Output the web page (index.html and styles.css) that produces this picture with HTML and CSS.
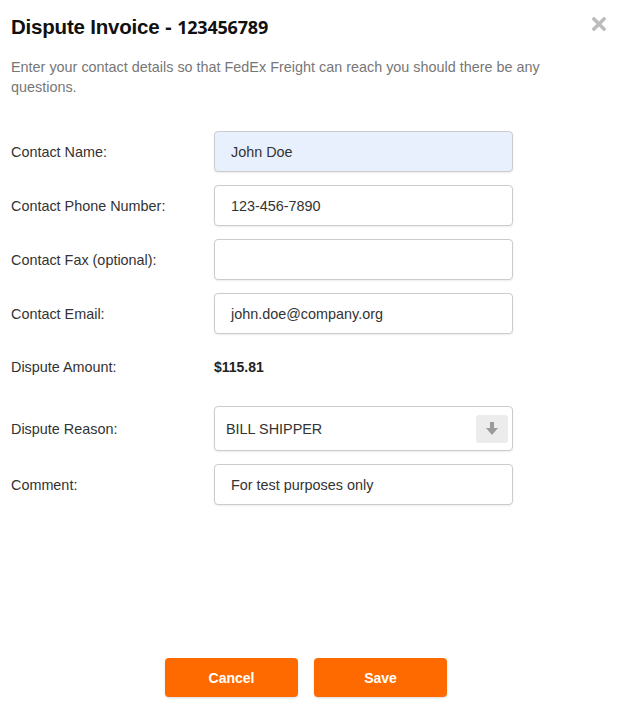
FILE: index.html
```html
<!DOCTYPE html>
<html>
<head>
<meta charset="utf-8">
<link rel="stylesheet" href="styles.css">
</head>
<body>
<div class="dialog">
  <div class="header">
    <h1 class="title">Dispute Invoice - <span class="inv">123456789</span></h1>
    <svg class="close" width="14" height="14" viewBox="0 0 14 14"><path d="M2 2 L12 12 M12 2 L2 12" stroke="#bdbdbd" stroke-width="3.6" stroke-linecap="square"/></svg>
  </div>
  <p class="desc">Enter your contact details so that FedEx Freight can reach you should there be any questions.</p>
  <div class="form">
    <div class="row"><div class="label">Contact Name:</div><div class="field autofill">John Doe</div></div>
    <div class="row"><div class="label">Contact Phone Number:</div><div class="field">123-456-7890</div></div>
    <div class="row"><div class="label">Contact Fax (optional):</div><div class="field"></div></div>
    <div class="row"><div class="label">Contact Email:</div><div class="field">john.doe@company.org</div></div>
    <div class="row amount-row"><div class="label">Dispute Amount:</div><div class="amount">$115.81</div></div>
    <div class="row"><div class="label">Dispute Reason:</div>
      <div class="field select"><span>BILL SHIPPER</span>
        <span class="arrow"><svg width="12" height="13" viewBox="0 0 12 13"><path d="M4 0 H8 V6 H12 L6 13 L0 6 H4 Z" fill="#9a9a9a"/></svg></span>
      </div>
    </div>
    <div class="row"><div class="label">Comment:</div><div class="field">For test purposes only</div></div>
  </div>
  <div class="footer">
    <button class="btn">Cancel</button>
    <button class="btn">Save</button>
  </div>
</div>
</body>
</html>
```
FILE: styles.css
```css
html, body { margin: 0; padding: 0; background: #fff; }
body { font-family: "Liberation Sans", Arial, sans-serif; color: #333; }
.dialog {
  height: 712px;
  box-sizing: border-box;
  padding: 13px 12px 15px 11px;
  display: flex;
  flex-direction: column;
}
.header { display: flex; justify-content: space-between; align-items: flex-start; }
.title {
  margin: 0;
  font-size: 20.5px;
  font-weight: 700;
  color: #111;
  line-height: 28px;
  letter-spacing: -0.2px;
}
.inv { font-family: "Open Sans", sans-serif; font-size: 18px; font-weight: 700; letter-spacing: -0.2px; }
.close { margin-top: 4px; margin-right: 2px; }
.desc {
  margin: 16px 0 0 0;
  font-size: 14.4px;
  line-height: 20px;
  color: #777;
  max-width: 570px;
}
.form { margin-top: 34px; display: flex; flex-direction: column; gap: 13px; }
.row { display: flex; align-items: center; }
.label { width: 203px; font-size: 14.4px; color: #333; }
.field {
  width: 299px;
  height: 41px;
  box-sizing: border-box;
  border: 1px solid #ccc;
  border-radius: 4px;
  box-shadow: 0 1px 2px rgba(0,0,0,0.08);
  padding: 0 16px;
  font-size: 14.4px;
  color: #333;
  display: flex;
  align-items: center;
  background: #fff;
}
.autofill { background: #e8f0fe; }
.amount-row { height: 40px; margin-bottom: 6px; }
.amount { font-weight: 700; font-size: 14px; color: #222; }
.select { height: 45px; padding: 0 4px 0 11px; justify-content: space-between; }
.arrow {
  width: 32px; height: 28px;
  background: #ececec;
  border-radius: 3px;
  display: flex; align-items: center; justify-content: center;
}
.footer { margin-top: auto; display: flex; justify-content: center; gap: 16px; padding-right: 7px; }
.btn {
  width: 133px;
  height: 39px;
  border: none;
  border-radius: 4px;
  background: #ff6a00;
  color: #fff;
  font-family: "Liberation Sans", Arial, sans-serif;
  font-size: 14px;
  font-weight: 700;
  box-shadow: 0 1px 2px rgba(0,0,0,0.15);
}
```
